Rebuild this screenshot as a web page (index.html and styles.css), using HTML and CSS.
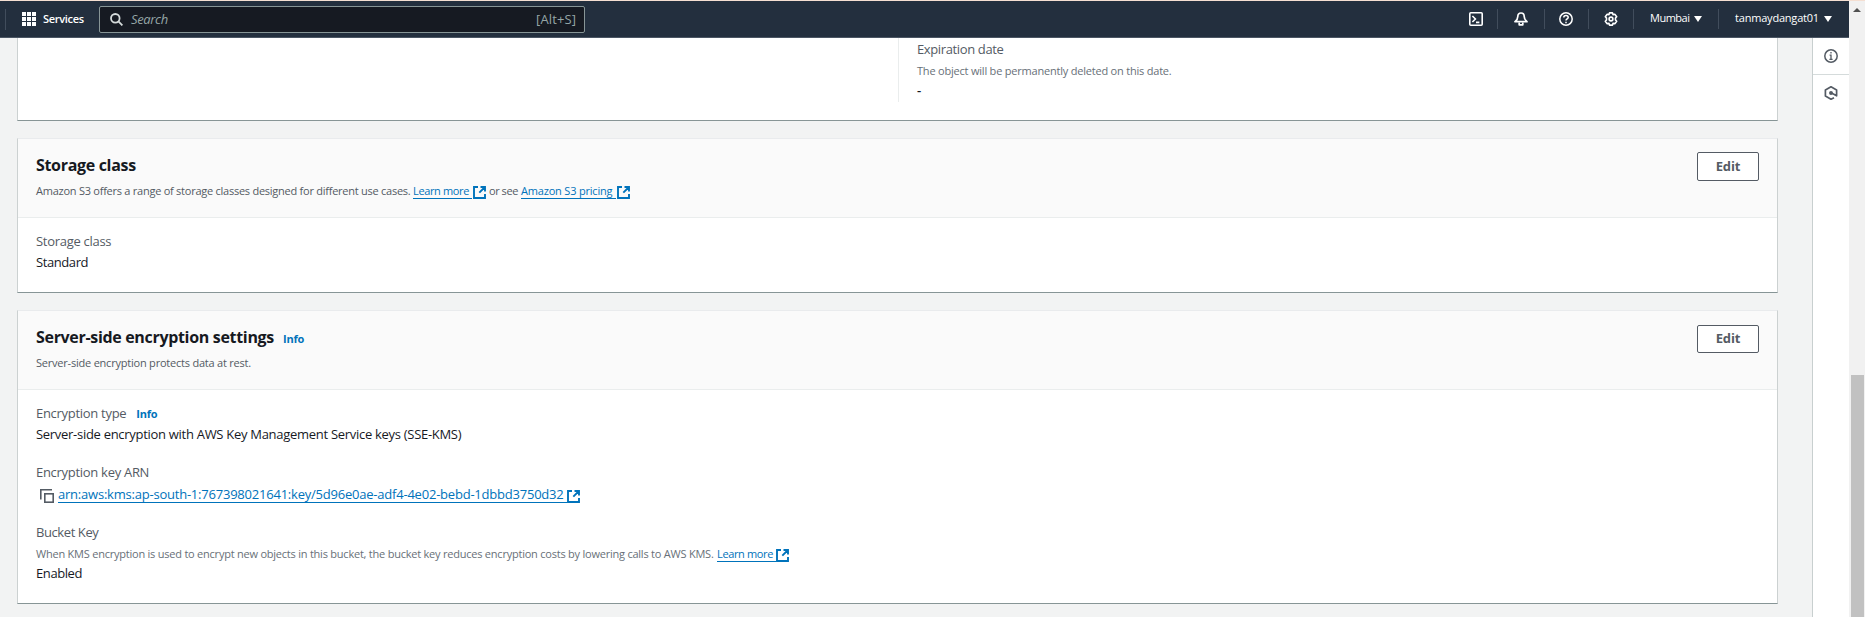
FILE: index.html
```html
<!DOCTYPE html>
<html lang="en">
<head>
<meta charset="utf-8">
<title>S3 object properties</title>
<link rel="stylesheet" href="styles.css">
</head>
<body>
<svg class="defs" aria-hidden="true">
  <symbol id="external" viewBox="0 0 13 13"><path d="M5 1H1v11h11V8M7.500 1H12v4.500M12 1L6.300 6.700" fill="none" stroke="currentColor" stroke-width="1.900"/></symbol>
</svg>
<div class="app">
  <div class="screen">
    <header class="topbar">
      <i class="divider first"></i>
      <svg class="grid-icon" width="14" height="14" viewBox="0 0 14 14" fill="#fff"><path d="M0 0h4v4H0zM5 0h4v4H5zM10 0h4v4h-4zM0 5h4v4H0zM5 5h4v4H5zM10 5h4v4h-4zM0 10h4v4H0zM5 10h4v4H5zM10 10h4v4h-4z"/></svg>
      <span class="services">Services</span>
      <div class="search">
        <svg width="13" height="13" viewBox="0 0 13 13" fill="none" stroke="#d5dbdb" stroke-width="1.8"><circle cx="5.3" cy="5.3" r="4.3"/><path d="M8.4 8.4l4 4"/></svg>
        <span class="placeholder">Search</span>
        <span class="shortcut">[Alt+S]</span>
      </div>
      <nav class="tools">
        <span class="tool shell"><svg width="14" height="14" viewBox="0 0 14 14" fill="none" stroke="#fff" stroke-width="1.6"><rect x=".8" y=".8" width="12.4" height="12.4" rx="1"/><path d="M3.4 4l3 3-3 3M7 10.4h3.4"/></svg></span>
        <span class="tool bell"><svg width="14" height="14" viewBox="0 0 14 14" fill="none" stroke="#fff" stroke-width="1.7" stroke-linejoin="round"><path d="M7 1C4.8 1 3.8 2.600 3.800 4.500C3.800 7 2.800 8.300 1 9.700h12C11.200 8.300 10.200 7 10.200 4.500C10.200 2.600 9.200 1 7 1z"/><path d="M5.200 10.500v2.300h3.600v-2.300"/></svg></span>
        <span class="tool help"><svg width="14" height="14" viewBox="0 0 14 14" fill="none" stroke="#fff" stroke-width="1.5"><circle cx="7" cy="7" r="6.200"/><path d="M4.800 5.600C4.800 4.200 5.700 3.500 7 3.500s2.200.8 2.200 1.900C9.200 6.800 7 6.900 7 8.500M7 9.700v1.500"/></svg></span>
        <span class="tool gear"><svg width="14" height="14" viewBox="0 0 14 14" fill="none" stroke="#fff" stroke-width="1.6" stroke-linejoin="round"><path d="M5.500 .9h3l.5 1.700 1.800-.4 1.900 2.500L11.500 6v2l1.200 1.300-1.900 2.500-1.800-.4-.5 1.700h-3L5 11.400l-1.800.4-1.900-2.500L2.500 8V6L1.300 4.700l1.900-2.500 1.800.4z"/><circle cx="7" cy="7" r="1.900"/></svg></span>
        <span class="tool region"><b class="label">Mumbai</b><i class="caret"></i></span>
        <span class="tool user"><b class="label">tanmaydangat01</b><i class="caret"></i></span>
      </nav>
    </header>
    <div class="below">
      <main class="content">
        <section class="card lifecycle">
          <div class="column">
            <div class="name">Expiration date</div>
            <div class="hint">The object will be permanently deleted on this date.</div>
            <div class="value dash">-</div>
          </div>
        </section>

        <section class="card">
          <div class="card-head">
            <div>
              <h2>Storage class</h2>
              <div class="desc"><span class="lead">Amazon S3 offers a range of storage classes designed for different use cases.</span><a class="link learn">Learn more</a><svg class="ext"><use href="#external"/></svg><span class="or">or see</span><a class="link pricing">Amazon S3 pricing</a><svg class="ext"><use href="#external"/></svg></div>
            </div>
            <button class="edit">Edit</button>
          </div>
          <div class="card-body">
            <div class="name">Storage class</div>
            <div class="value standard">Standard</div>
          </div>
        </section>

        <section class="card">
          <div class="card-head">
            <div>
              <div class="title-row"><h2>Server-side encryption settings</h2><a class="info">Info</a></div>
              <div class="desc">Server-side encryption protects data at rest.</div>
            </div>
            <button class="edit short">Edit</button>
          </div>
          <div class="card-body">
            <div class="field">
              <div class="name">Encryption type<a class="info small">Info</a></div>
              <div class="value">Server-side encryption with AWS Key Management Service keys (SSE-KMS)</div>
            </div>
            <div class="field">
              <div class="name">Encryption key ARN</div>
              <div class="value arn"><svg class="copy" width="14" height="14" viewBox="0 0 14 14" fill="none" stroke="#545b64" stroke-width="1.6"><path d="M.8 10.500V.8h11.200"/><rect x="4.800" y="4.800" width="8.400" height="8.400"/></svg><a class="link">arn:aws:kms:ap-south-1:767398021641:key/5d96e0ae-adf4-4e02-bebd-1dbbd3750d32</a><svg class="ext"><use href="#external"/></svg></div>
            </div>
            <div class="field">
              <div class="name bucket">Bucket Key</div>
              <div class="hint key-hint"><span>When KMS encryption is used to encrypt new objects in this bucket, the bucket key reduces encryption costs by lowering calls to AWS KMS.</span><a class="link learn">Learn more</a><svg class="ext"><use href="#external"/></svg></div>
              <div class="value enabled">Enabled</div>
            </div>
          </div>
        </section>
      </main>
      <aside class="rail">
        <div class="rail-item"><svg width="14" height="14" viewBox="0 0 14 14" fill="none" stroke="#545b64" stroke-width="1.500"><circle cx="7" cy="7" r="6.200"/><path d="M7 3v1.600M5.600 6.200H7v4.300M5.400 10.300h3.200" stroke-width="1.300"/></svg></div>
        <div class="rail-item"><svg width="14" height="14" viewBox="0 0 14 14" fill="none" stroke="#545b64" stroke-width="1.700" stroke-linejoin="round"><path d="M10 11.700L7 13.200 1.400 10.100V3.900L7 .8l5.600 3.100V9.800L7.500 7.100"/><circle cx="7" cy="7" r="1.100" fill="#545b64"/></svg></div>
      </aside>
    </div>
  </div>
  <div class="scrollbar"><i class="up"></i><i class="thumb"></i></div>
</div>
</body>
</html>
```
FILE: styles.css
```css
* { box-sizing: border-box; }
body {
  margin: 0;
  height: 617px;
  overflow: hidden;
  background: #f2f3f3;
  border-top: 1px solid #f5dfd2;
  font: 13px/20px "Open Sans", "Noto Sans", sans-serif;
  letter-spacing: -0.29px;
  color: #16191f;
  white-space: nowrap;
}
.defs { display: none; }
svg { display: block; flex: none; }
.app { display: flex; height: 616px; }
.screen { flex: 1; min-width: 0; display: flex; flex-direction: column; }

.topbar {
  display: flex;
  align-items: center;
  height: 37px;
  flex: none;
  background: #232f3e;
  border-bottom: 1px solid #4b5664;
  color: #fff;
}
.divider { width: 1px; height: 21px; margin-left: 5px; background: #414d5c; }
.grid-icon { margin-left: 16px; }
.services { width: 41px; margin: 0 15px 0 7px; padding-bottom: 1px; font-weight: 600; font-size: 11px; letter-spacing: -0.3px; }
.search {
  display: flex;
  align-items: center;
  width: 486px;
  height: 27px;
  padding: 0 8px 0 10px;
  background: #161a22;
  border: 1px solid #879596;
  border-radius: 2px;
  font-size: 13px;
  color: #95a5a6;
}
.placeholder { margin-left: 8px; padding-bottom: 1px; font-style: italic; letter-spacing: -0.35px; }
.shortcut { margin-left: auto; padding-bottom: 1px; letter-spacing: 0.1px; }
.tools { display: flex; align-items: center; margin-left: auto; }
.tool { display: flex; align-items: center; height: 20px; border-left: 1px solid #414d5c; }
.shell { width: 28px; border-left: 0; }
.bell { width: 47px; padding-left: 16px; }
.help { width: 44px; padding-left: 14px; }
.gear { width: 45px; padding-left: 15px; }
.region { width: 85px; padding-left: 16px; }
.user { width: 131px; padding-left: 16px; }
.label { font-weight: 500; font-size: 11px; letter-spacing: -0.2px; padding-bottom: 2px; }
.region .label { letter-spacing: -0.5px; }
.caret { margin-left: 5px; border: 4px solid transparent; border-top: 6px solid #fff; border-bottom: 0; }

.below { flex: 1; display: flex; min-height: 0; }
.content { flex: 1; min-width: 0; padding-left: 17px; }
.rail { flex: none; width: 37px; background: #fff; border-left: 1px solid #c8cfcf; }
.rail-item { display: flex; justify-content: center; padding-top: 11px; height: 36px; }
.rail-item + .rail-item { border-top: 1px solid #d5dbdb; }

.card {
  width: 1761px;
  margin-bottom: 17px;
  background: #fff;
  border: 1px solid #ccd1d1;
  border-top-color: #e9ebed;
  border-bottom: 1px solid #879596;
}
.lifecycle { height: 83px; border-top: 0; }
.column {
  height: 64px;
  margin-left: 880px;
  padding: 1px 0 0 18px;
  border-left: 1px solid #eaeded;
}
.column .name { letter-spacing: -0.37px; }
.column .hint { margin-top: 4px; letter-spacing: -0.206px; }
.dash { font-weight: 600; }
.card-head {
  display: flex;
  justify-content: space-between;
  height: 79px;
  padding: 16px 18px 0;
  background: #fafafa;
  border-bottom: 1px solid #eaeded;
}
h2 { margin: 0; font-size: 16px; line-height: 20px; font-weight: 700; letter-spacing: -0.32px; }
.title-row { display: flex; gap: 9px; }
.info { color: #0073bb; font-size: 11px; font-weight: 700; letter-spacing: -0.2px; }
.title-row .info { line-height: 24px; height: 20px; }
.small { margin-left: 10px; line-height: 16px; }
.desc { display: flex; margin-top: 8px; font-size: 11px; line-height: 16px; letter-spacing: -0.214px; color: #545b64; }
.lead { width: 377px; letter-spacing: -0.25px; }
.link { color: #0073bb; box-shadow: inset 0 -1px #0073bb; padding-right: 3px; }
.learn { width: 59px; letter-spacing: -0.36px; }
.pricing { width: 95px; letter-spacing: -0.19px; }
.or { margin: 0 3px; width: 29px; letter-spacing: -0.45px; }
.ext { width: 13px; height: 13px; margin: 3px 0 0 1px; color: #0073bb; }
.edit {
  width: 62px;
  height: 29px;
  margin-top: -3px;
  padding: 0 0 1px;
  border: 1px solid #545b64;
  border-radius: 2px;
  background: #fff;
  color: #545b64;
  font: 700 13px/20px "Open Sans", sans-serif;
  letter-spacing: -0.1px;
}
.short { height: 28px; margin-top: -2px; padding-bottom: 2px; }

.card-body { padding: 13px 18px 20px; }
.name { color: #545b64; }
.value { margin-top: 1px; }
.standard, .enabled, .bucket { letter-spacing: -0.41px; }
.field + .field { margin-top: 18px; }
.arn { display: flex; height: 20px; margin-top: 2px; padding-left: 4px; letter-spacing: -0.218px; }
.arn .link { height: 19px; }
.copy { margin: 5px 4px 0 0; }
.arn .ext { margin: 6px 0 0; }
.hint { font-size: 11px; line-height: 16px; color: #687078; }
.key-hint { display: flex; margin-top: 4px; letter-spacing: -0.225px; }
.key-hint span { width: 681px; }
.key-hint .ext { margin-left: 0; }

.scrollbar { flex: none; display: flex; flex-direction: column; align-items: center; width: 16px; background: #f1f1f1; }
.up { margin-top: 7px; border: 4px solid transparent; border-top: 0; border-bottom: 4px solid #505050; }
.thumb { width: 13px; margin-top: 363px; flex: 1; background: #c1c1c1; }
```
